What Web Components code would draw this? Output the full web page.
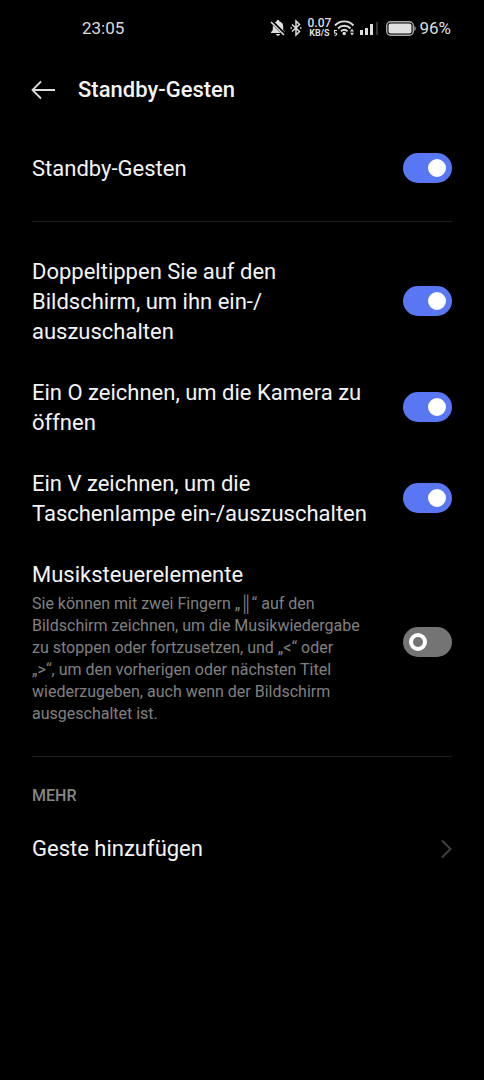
<!DOCTYPE html>
<html lang="de">
<head>
<meta charset="utf-8">
<meta name="viewport" content="width=device-width, initial-scale=1">
<title>Standby-Gesten</title>
<style>
  body { margin: 0; min-height: 100vh; background: #000; color: #f4f4f4; font-family: Roboto, "Noto Sans", sans-serif; }
</style>
</head>
<body>
<gesture-settings></gesture-settings>
<script>
const define = (name, html, setup) => {
  const template = document.createElement('template');
  template.innerHTML = html;
  customElements.define(name, class extends HTMLElement {
    constructor() {
      super();
      this.attachShadow({ mode: 'open' }).append(template.content.cloneNode(true));
    }
    connectedCallback() { if (setup) setup(this, this.shadowRoot); }
  });
};

define('status-bar', `
<style>
  :host { display: flex; align-items: center; height: 56px; padding: 0 33px 0 82px; color: #dedede; font-size: 17px; line-height: 20px; }
  .icons { display: flex; align-items: center; margin-left: auto; }
  svg { display: block; flex: none; }
  .rate { display: flex; flex-direction: column; align-items: center; width: 24px; margin: 0 2px; font-size: 12px; line-height: 10px; font-weight: 500; }
  .rate small { font-size: 9px; line-height: 10px; font-weight: 700; }
  .signal { margin-left: 5px; }
  .battery { margin: 0 3px 0 7px; }
</style>
<time>23:05</time>
<div class="icons">
  <svg width="18" height="18" viewBox="0 0 18 18" aria-label="Stumm"><path fill="#dedede" d="M9 1c1 0 1.500.6 1.500 1.500C13 3.300 14.200 5 14.200 7.500V11l1.800 2.200v.8H2v-.8L3.800 11V7.500C3.800 5 5 3.300 7.500 2.500 7.500 1.600 8 1 9 1zM7 15h4c-.2 1.200-1 1.800-2 1.800S7.200 16.200 7 15z"/><path stroke="#000" stroke-width="3.600" d="M2 2l14 14"/><path stroke="#dedede" stroke-width="1.600" d="M2 3l13 13"/></svg>
  <svg width="18" height="18" viewBox="0 0 18 18" aria-label="Bluetooth"><path fill="none" stroke="#dedede" stroke-width="1.500" d="M5 5.500l7.500 7L9 16V2l3.500 3.500-7.500 7M3.500 9H5M13 9h1.500"/></svg>
  <span class="rate"><span>0.07</span><small>KB/S</small></span>
  <svg width="22" height="18" viewBox="0 0 22 18" aria-label="WLAN"><g fill="none" stroke="#dedede" stroke-width="1.900"><path d="M2 6.500C7 1 15.500 1 20.500 6.500M5 9.500c3.500-3.600 9-3.600 12.500 0M8 12.200c2-1.700 4.500-1.700 6.500 0"/></g><circle cx="11.200" cy="14.500" r="1.700" fill="#dedede"/><path fill="#dedede" d="M19 9.800l2 2.700h-4zM19 16.500l-2-2.700h4z"/><path fill="none" stroke="#dedede" stroke-width="1.100" d="M4 11.500H1.500V14c2.800-.6 3 2.800 0 2.300"/></svg>
  <svg class="signal" width="19" height="14" viewBox="0 0 19 14" aria-label="Mobilfunk"><path fill="#dedede" d="M0 9h3v5H0zM5 7h3v7H5zM10 3h3v11h-3z"/><path fill="#333" d="M16 1h2v13h-2z"/></svg>
  <svg class="battery" width="30" height="15" viewBox="0 0 30 15" aria-label="Akku"><rect x=".7" y=".7" width="26.600" height="13.600" rx="4" fill="none" stroke="#aaa" stroke-width="1.400"/><rect x="2.500" y="2.500" width="23" height="10" rx="2" fill="#e0e0e0"/><path fill="#999" d="M28.300 5c2 .4 2 4.600 0 5z"/></svg>
  <span>96%</span>
</div>`);

define('page-header', `
<style>
  :host { display: flex; align-items: center; gap: 22px; height: 68px; padding: 0 30px; }
  button { display: block; width: 26px; height: 26px; padding: 0; border: 0; background: none; }
  svg { display: block; }
  h1 { margin: 0; font-size: 22px; line-height: 30px; font-weight: 500; }
</style>
<button type="button" aria-label="Zurück"><svg width="26" height="26" viewBox="0 0 26 26" fill="none" stroke="#dcdcdc" stroke-width="1.800"><path d="M11 4.500L2.500 13l8.500 8.500M2.500 13H25"/></svg></button>
<h1><slot></slot></h1>`);

define('toggle-row', `
<style>
  :host { display: block; }
  label { display: flex; align-items: center; justify-content: space-between; gap: 36px; padding: 14px 32px 15px; font-size: 22px; line-height: 30px; }
  .text { flex: 1; padding-top: 2px; }
  ::slotted([slot="note"]) { display: block; margin-top: 3px; color: #808080; font-size: 16px; line-height: 22px; }
  input { appearance: none; display: flex; align-items: center; flex: none; box-sizing: border-box; width: 49px; height: 30px; margin: 0; padding: 0 6px; border-radius: 15px; background: #747474; }
  input::before { content: ""; box-sizing: border-box; width: 18px; height: 18px; border: 4px solid #fff; border-radius: 50%; }
  input:checked { justify-content: flex-end; background: #5977f2; }
  input:checked::before { background: #fff; }
</style>
<label><span class="text"><slot></slot><slot name="note"></slot></span><input type="checkbox" role="switch"></label>`,
(host, root) => { root.querySelector('input').checked = host.hasAttribute('checked'); });

define('section-divider', `
<style>
  :host { display: block; height: 1px; margin: 0 32px; background: #1e1e1e; }
</style>`);

define('section-title', `
<style>
  h2 { margin: 0; padding: 0 32px; color: #868686; font-size: 16px; line-height: 22px; font-weight: 500; }
</style>
<h2><slot></slot></h2>`);

define('link-row', `
<style>
  :host { display: block; }
  a { display: flex; align-items: center; justify-content: space-between; padding: 15px 32px 16px; color: inherit; text-decoration: none; font-size: 22px; line-height: 30px; }
</style>
<a href="#"><slot></slot><svg width="12" height="20" viewBox="0 0 12 20" fill="none" stroke="#444" stroke-width="1.800" aria-hidden="true"><path d="M2 1.500l8.500 8.500L2 18.500"/></svg></a>`);

define('gesture-settings', `
<style>
  :host { display: block; }
  .group { padding: 19px 0 16px; }
  .main.group { padding: 14px 0 22px; }
  .more { padding-top: 28px; }
  link-row { margin-top: 12px; }
</style>
<status-bar></status-bar>
<page-header>Standby-Gesten</page-header>
<main>
  <section class="main group"><toggle-row checked>Standby-Gesten</toggle-row></section>
  <section-divider></section-divider>
  <section class="group">
    <toggle-row checked>Doppeltippen Sie auf den Bildschirm, um ihn ein-/<wbr>auszuschalten</toggle-row>
    <toggle-row checked>Ein O zeichnen, um die Kamera zu öffnen</toggle-row>
    <toggle-row checked>Ein V zeichnen, um die Taschenlampe ein-/auszuschalten</toggle-row>
    <toggle-row>Musiksteuerelemente<span slot="note">Sie können mit zwei Fingern „║“ auf den Bildschirm zeichnen, um die Musikwiedergabe zu stoppen oder fortzusetzen, und „&lt;“ oder <br>„&gt;“, um den vorherigen oder nächsten Titel wiederzugeben, auch wenn der Bildschirm ausgeschaltet ist.</span></toggle-row>
  </section>
  <section-divider></section-divider>
  <section class="more">
    <section-title>MEHR</section-title>
    <link-row>Geste hinzufügen</link-row>
  </section>
</main>`);
</script>
</body>
</html>
